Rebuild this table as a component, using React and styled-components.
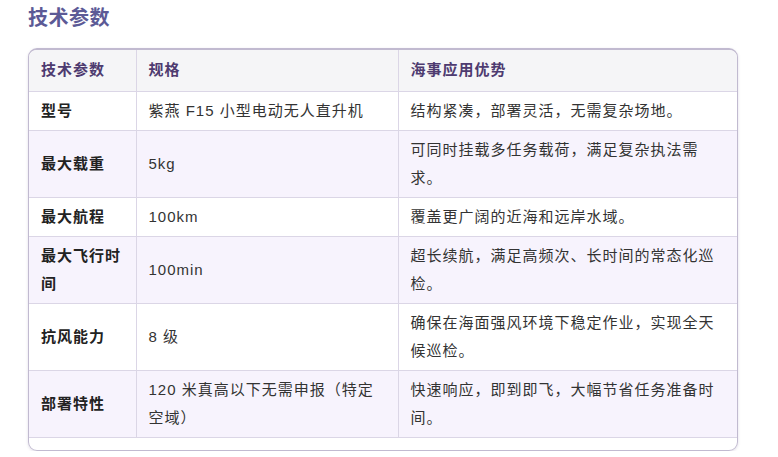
import React from "react";
import styled, { createGlobalStyle } from "styled-components";

const GlobalStyle = createGlobalStyle`
  body {
    margin: 0;
    background: #ffffff;
    font-family: "Liberation Sans", "Noto Sans CJK SC", sans-serif;
  }
`;

const Page = styled.div`
  padding: 4px 40px 0 28px;
`;

const Title = styled.h2`
  margin: 0 0 16px;
  font-size: 20px;
  line-height: 28px;
  font-weight: 700;
  letter-spacing: 0.5px;
  color: #5c5a96;
`;

const Wrapper = styled.div`
  width: 710px;
  box-sizing: border-box;
  border: 1px solid #c1bad0;
  border-top-width: 2px;
  border-radius: 9px;
  overflow: hidden;
  padding-bottom: 12px;
  box-shadow: 0 1px 3px rgba(90, 70, 130, 0.18);
`;

const Table = styled.table`
  width: 100%;
  border-collapse: collapse;
  table-layout: fixed;
  font-size: 15px;
  letter-spacing: 1px;
`;

const HeadCell = styled.th`
  text-align: left;
  background: #f5f5f7;
  color: #4e3b70;
  font-weight: 700;
  line-height: 28px;
  padding: 6px 12px 7px;
  border: 1px solid #dbd6e6;
  border-top: none;
  &:first-child { border-left: none; }
  &:last-child { border-right: none; }
`;

const Row = styled.tr`
  background: ${(p) => (p.$tinted ? "#f7f3fd" : "#ffffff")};
`;

const Cell = styled.td`
  color: ${(p) => (p.$label ? "#222222" : "#333333")};
  font-weight: ${(p) => (p.$label ? 700 : 400)};
  line-height: 28px;
  padding: 5px 12px;
  vertical-align: middle;
  border: 1px solid #dbd6e6;
  &:first-child { border-left: none; }
  &:last-child { border-right: none; }
`;

const rows = [
  ["型号", "紫燕 F15 小型电动无人直升机", "结构紧凑，部署灵活，无需复杂场地。"],
  ["最大载重", "5kg", "可同时挂载多任务载荷，满足复杂执法需求。"],
  ["最大航程", "100km", "覆盖更广阔的近海和远岸水域。"],
  ["最大飞行时间", "100min", "超长续航，满足高频次、长时间的常态化巡检。"],
  ["抗风能力", "8 级", "确保在海面强风环境下稳定作业，实现全天候巡检。"],
  ["部署特性", "120 米真高以下无需申报（特定空域）", "快速响应，即到即飞，大幅节省任务准备时间。"],
];

export default function App() {
  return (
    <Page>
      <GlobalStyle />
      <Title>技术参数</Title>
      <Wrapper>
        <Table>
          <colgroup>
            <col style={{ width: 107 }} />
            <col style={{ width: 262 }} />
            <col />
          </colgroup>
          <thead>
            <tr>
              <HeadCell>技术参数</HeadCell>
              <HeadCell>规格</HeadCell>
              <HeadCell>海事应用优势</HeadCell>
            </tr>
          </thead>
          <tbody>
            {rows.map(([label, spec, note], i) => (
              <Row key={label} $tinted={i % 2 === 1}>
                <Cell $label>{label}</Cell>
                <Cell>{spec}</Cell>
                <Cell>{note}</Cell>
              </Row>
            ))}
          </tbody>
        </Table>
      </Wrapper>
    </Page>
  );
}
